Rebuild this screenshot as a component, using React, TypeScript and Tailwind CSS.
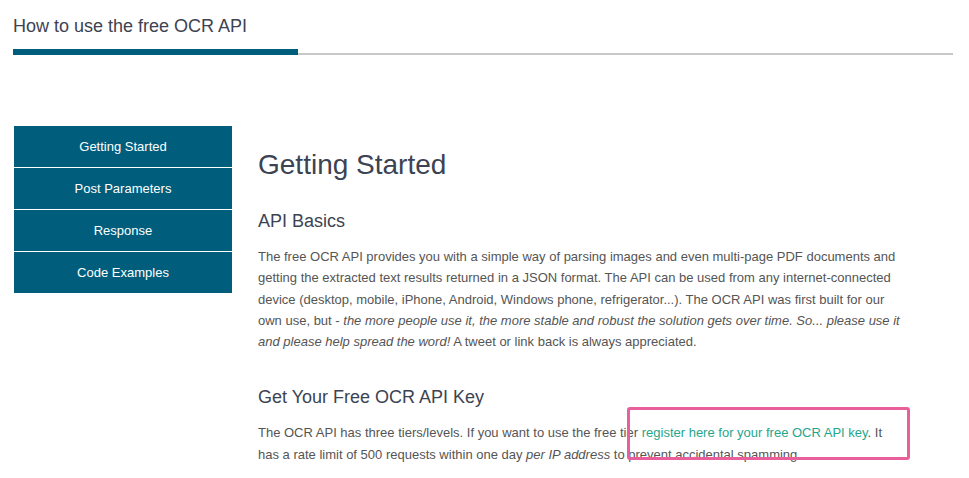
export default function App() {
  return (
    <div
      className="relative min-h-[478px] w-[969px] bg-white"
      style={{ fontFamily: '"Liberation Sans", Arial, sans-serif' }}
    >
      {/* tab header */}
      <header className="ml-[13px] mr-[16px] pt-[13px]">
        <h2 className="text-[18px] leading-[27px] text-[#3c4352]">How to use the free OCR API</h2>
        <div className="mt-[9px] flex items-end">
          <div className="h-[6px] w-[285px] bg-[#005e7c]" />
          <div className="h-[2px] flex-1 bg-[#c8c8c8]" />
        </div>
      </header>

      <div className="mt-[71px] flex">
        {/* side nav */}
        <nav className="ml-[14px] flex w-[218px] flex-col gap-px self-start">
          {["Getting Started", "Post Parameters", "Response", "Code Examples"].map((item) => (
            <a
              key={item}
              href="#"
              className="flex h-[41px] items-center justify-center bg-[#005e7c] text-[13px] text-white"
            >
              {item}
            </a>
          ))}
        </nav>

        {/* content */}
        <main className="ml-[26px] pt-[23px] text-[#3c4352]">
          <h1 className="text-[28px] leading-[31px]">Getting Started</h1>

          <h3 className="mt-[31px] text-[18px] leading-[20px]">API Basics</h3>
          <p className="mt-[15px] whitespace-nowrap text-[13px] leading-[21.3px] text-[#555]">
            The free OCR API provides you with a simple way of parsing images and even multi-page PDF documents and
            <br />
            getting the extracted text results returned in a JSON format. The API can be used from any internet-connected
            <br />
            device (desktop, mobile, iPhone, Android, Windows phone, refrigerator...). The OCR API was first built for our
            <br />
            own use, but - <em>the more people use it, the more stable and robust the solution gets over time. So... please use it</em>
            <br />
            <em>and please help spread the word!</em> A tweet or link back is always appreciated.
          </p>

          <h3 className="mt-[35px] text-[18px] leading-[20px]">Get Your Free OCR API Key</h3>
          <p className="mt-[15px] whitespace-nowrap text-[13px] leading-[21.3px] text-[#555]">
            The OCR API has three tiers/levels. If you want to use the free tier{" "}
            <a href="#" className="text-[#1fa68b]">
              register here for your free OCR API key
            </a>
            . It
            <br />
            has a rate limit of 500 requests within one day <em>per IP address</em> to prevent accidental spamming.
          </p>
        </main>
      </div>

      {/* annotation highlight */}
      <div className="pointer-events-none absolute left-[627px] top-[407px] h-[53px] w-[283px] rounded-[3px] border-[3px] border-[#e95f9b]" />
    </div>
  );
}
